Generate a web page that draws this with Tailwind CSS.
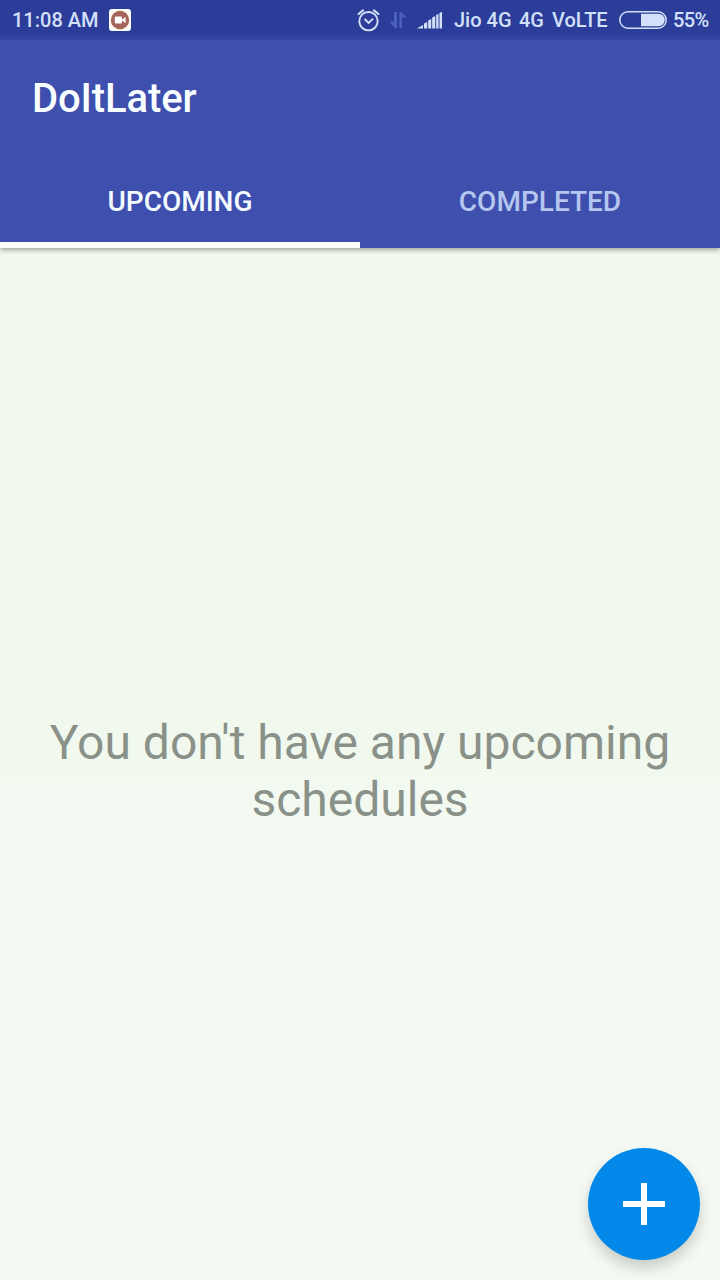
<!DOCTYPE html>
<html lang="en">
<head>
<meta charset="utf-8">
<title>DoItLater</title>
<script src="https://cdn.jsdelivr.net/npm/@tailwindcss/browser@4"></script>
</head>
<body class="relative flex h-[1280px] w-[720px] flex-col overflow-hidden bg-linear-to-b from-[#f1f9ee] from-58% to-[#f4faf3] to-66% font-['Roboto',sans-serif]">
  <header class="relative z-10 h-[248px] shrink-0 bg-[#3e4fae] shadow-[0_2px_5px_rgba(0,0,0,0.35)]">
    <!-- Status bar -->
    <div class="flex h-10 items-center bg-linear-to-b from-[#2b3d98] from-85% to-[#3547a4] pl-3 text-[20px] leading-[42px] font-medium whitespace-nowrap text-[#d3e0fa]">
      <span class="w-[97px]">11:08 AM</span>
      <svg class="size-[22px] shrink-0" viewBox="0 0 22 22">
        <rect width="22" height="22" rx="3" fill="#fbfdf8"/>
        <circle cx="11" cy="11" r="9.2" fill="#a5645c"/>
        <rect x="5.8" y="7.5" width="7.2" height="7" rx="1.2" fill="#fff"/>
        <path d="M13 10.5l3.6-2.5v6L13 11.8z" fill="#fff"/>
      </svg>
      <!-- Alarm -->
      <svg class="ml-[226px] h-[23px] w-[23px] shrink-0" viewBox="0 0 23 23" fill="none" stroke="#d3e0fa" stroke-width="1.9" stroke-linecap="round">
        <circle cx="11.5" cy="12.2" r="9.2"/>
        <path d="M1.6 5L6 1.400M17 1.400L21.400 5" stroke-width="2.200"/>
        <path d="M7.600 10l4 4 4.400-4.400" stroke-linecap="butt"/>
      </svg>
      <!-- Data transfer -->
      <svg class="ml-[9px] h-[18px] w-[18px] shrink-0" viewBox="0 0 18 18" fill="#4b60b8">
        <path d="M8 1v16H6L.4 10.600H5V1z"/>
        <path d="M10.400 17V1h2l5.200 5.600H13V17z"/>
      </svg>
      <!-- Signal -->
      <svg class="ml-[10px] h-[18px] w-[26px] shrink-0" viewBox="0 0 26 18" fill="#d3e0fa">
        <path d="M0 17.500L6 14V17.500zM7 12.500L10.200 11v6.500H7zM11.200 9.500L14.200 8v9.500h-3zM15.200 6.500L18.200 5v12.500h-3zM19.200 4L21.500 2.700v14.800h-2.300zM22.500 2L25 .7v16.800h-2.500z"/>
      </svg>
      <span class="ml-[11px] w-[65px]">Jio 4G</span>
      <span class="w-[33px]">4G</span>
      <span class="w-[67px]">VoLTE</span>
      <!-- Battery -->
      <svg class="h-[18px] w-[48px] shrink-0" viewBox="0 0 48 18">
        <rect x=".8" y=".8" width="46.400" height="16.400" rx="8.200" fill="none" stroke="#d3e0fa" stroke-width="1.500"/>
        <path d="M22 2.800H39.500a6.200 6.200 0 0 1 0 12.400H22z" fill="#d3e0fa"/>
      </svg>
      <span class="ml-[6px] tracking-[-0.6px]">55%</span>
    </div>
    <h1 class="h-[114px] pl-8 text-[40px] leading-[118px] font-medium tracking-[-0.1px] text-[#f8fdff]">DoItLater</h1>
    <nav class="flex h-[94px] text-center text-[28px] leading-[96px] font-medium">
      <div class="w-1/2 border-b-6 border-[#fbfffb] text-[#f3fbff]">UPCOMING</div>
      <div class="w-1/2 text-[#b5c6ef]">COMPLETED</div>
    </nav>
  </header>
  <main class="flex flex-1 items-center justify-center pt-[14px]">
    <p class="text-center text-[48px] leading-[57px] text-[#899189]">You don't have any upcoming<br>schedules</p>
  </main>
  <button aria-label="Add" class="absolute right-5 bottom-5 flex size-28 items-center justify-center rounded-full bg-[#0288e9] shadow-[0_8px_14px_rgba(0,0,0,0.18)]">
    <svg class="size-[42px]" viewBox="0 0 42 42" fill="#fff"><path d="M18 0h6v18h18v6H24v18h-6V24H0v-6h18z"/></svg>
  </button>
</body>
</html>
